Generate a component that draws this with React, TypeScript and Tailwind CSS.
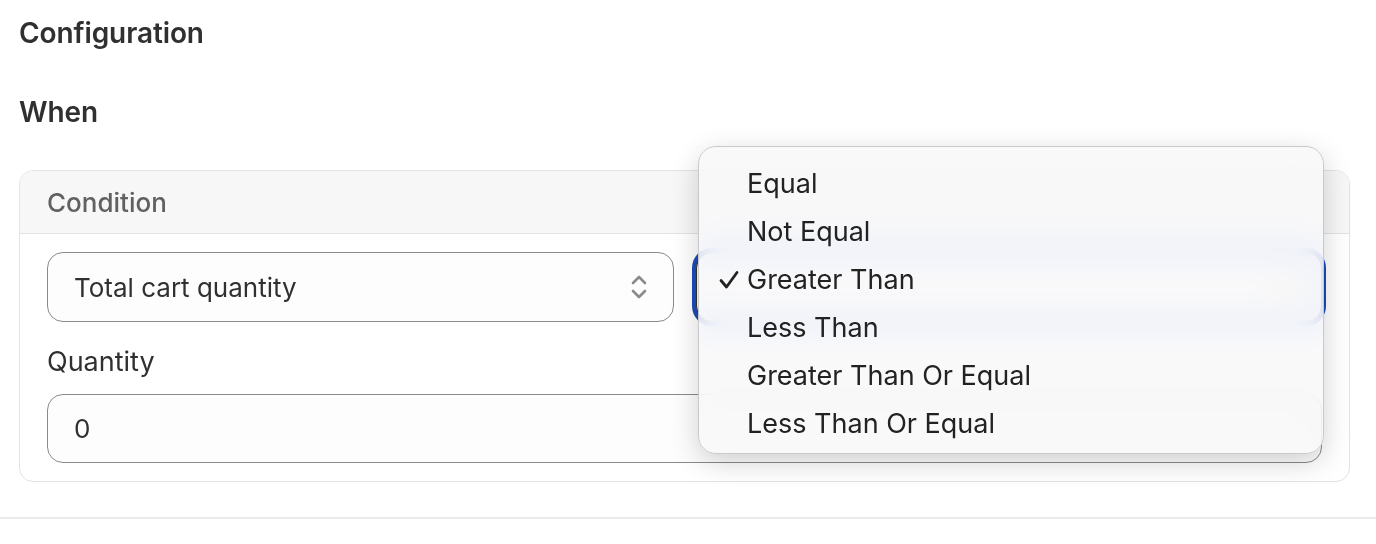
import React from "react";

const font = { fontFamily: "Inter, 'Noto Sans', sans-serif" };

function UpDown() {
  return (
    <svg width="20" height="30" viewBox="0 0 20 30" fill="none" stroke="#8a8a8a" strokeWidth="2.6" strokeLinecap="round" strokeLinejoin="round">
      <path d="M4 11 L10 5 L16 11" />
      <path d="M4 19 L10 25 L16 19" />
    </svg>
  );
}

function Check() {
  return (
    <svg width="20" height="20" viewBox="0 0 20 20" fill="none" stroke="#222" strokeWidth="2.8" strokeLinecap="round" strokeLinejoin="round">
      <path d="M2 10.5 L7.5 17 L18 2.5" />
    </svg>
  );
}

const items = ["Equal", "Not Equal", "Greater Than", "Less Than", "Greater Than Or Equal", "Less Than Or Equal"];

export default function App() {
  return (
    <div className="relative w-[1376px] h-[544px] bg-white overflow-hidden text-[#303030]" style={font}>
      <div className="pl-[19px] pr-[26px] pt-[16px]">
        <h2 className="text-[28px] leading-[34px] font-semibold tracking-[-0.1px]">Configuration</h2>
        <h3 className="mt-[45px] text-[28px] leading-[34px] font-semibold tracking-[-0.1px]">When</h3>
        <div className="mt-[41px] rounded-[14px] border border-[#e3e3e3] overflow-hidden">
          <div className="h-[63px] bg-[#f7f7f7] border-b border-[#e3e3e3] flex items-center px-[27px]">
            <span className="text-[26px] font-medium text-[#616161]">Condition</span>
          </div>
          <div className="px-[27px] pt-[18px] pb-[18px]">
            <div className="grid grid-cols-2 gap-[22px]">
              <div className="h-[70px] rounded-[16px] border-[1.5px] border-[#8a8a8a] bg-[#fdfdfd] flex items-center justify-between pl-[26px] pr-[24px]">
                <span className="text-[26px]">Total cart quantity</span>
                <UpDown />
              </div>
              <div className="h-[70px] rounded-[16px] border-[1.5px] border-[#303030] ring-[4px] ring-[#1d4bb8] bg-[#fdfdfd] flex items-center justify-end pr-[24px]">
                <UpDown />
              </div>
            </div>
            <div className="mt-[22px] text-[27px] leading-[36px]">Quantity</div>
            <div className="mt-[14px] h-[69px] rounded-[16px] border-[1.5px] border-[#8a8a8a] bg-[#fdfdfd] flex items-center pl-[26px]">
              <span className="text-[26px]">0</span>
            </div>
          </div>
        </div>
      </div>
      <div className="absolute left-0 right-0 top-[517px] h-[2px] bg-[#ebebeb]" />

      <div className="absolute left-[698px] top-[146px] w-[626px] h-[308px] rounded-[18px] border border-[#c9c9c9] bg-[#f8f8f9]/80 backdrop-blur-[14px] backdrop-saturate-[1.8] shadow-[0_8px_28px_rgba(0,0,0,0.18)] pt-[13px]">
        {items.map((it) => (
          <div key={it} className="h-[48px] flex items-center pl-[20px] text-[27px] text-[#222]">
            <span className="w-[28px] flex items-center">
              {it === "Greater Than" && <Check />}
            </span>
            <span>{it}</span>
          </div>
        ))}
      </div>
    </div>
  );
}
